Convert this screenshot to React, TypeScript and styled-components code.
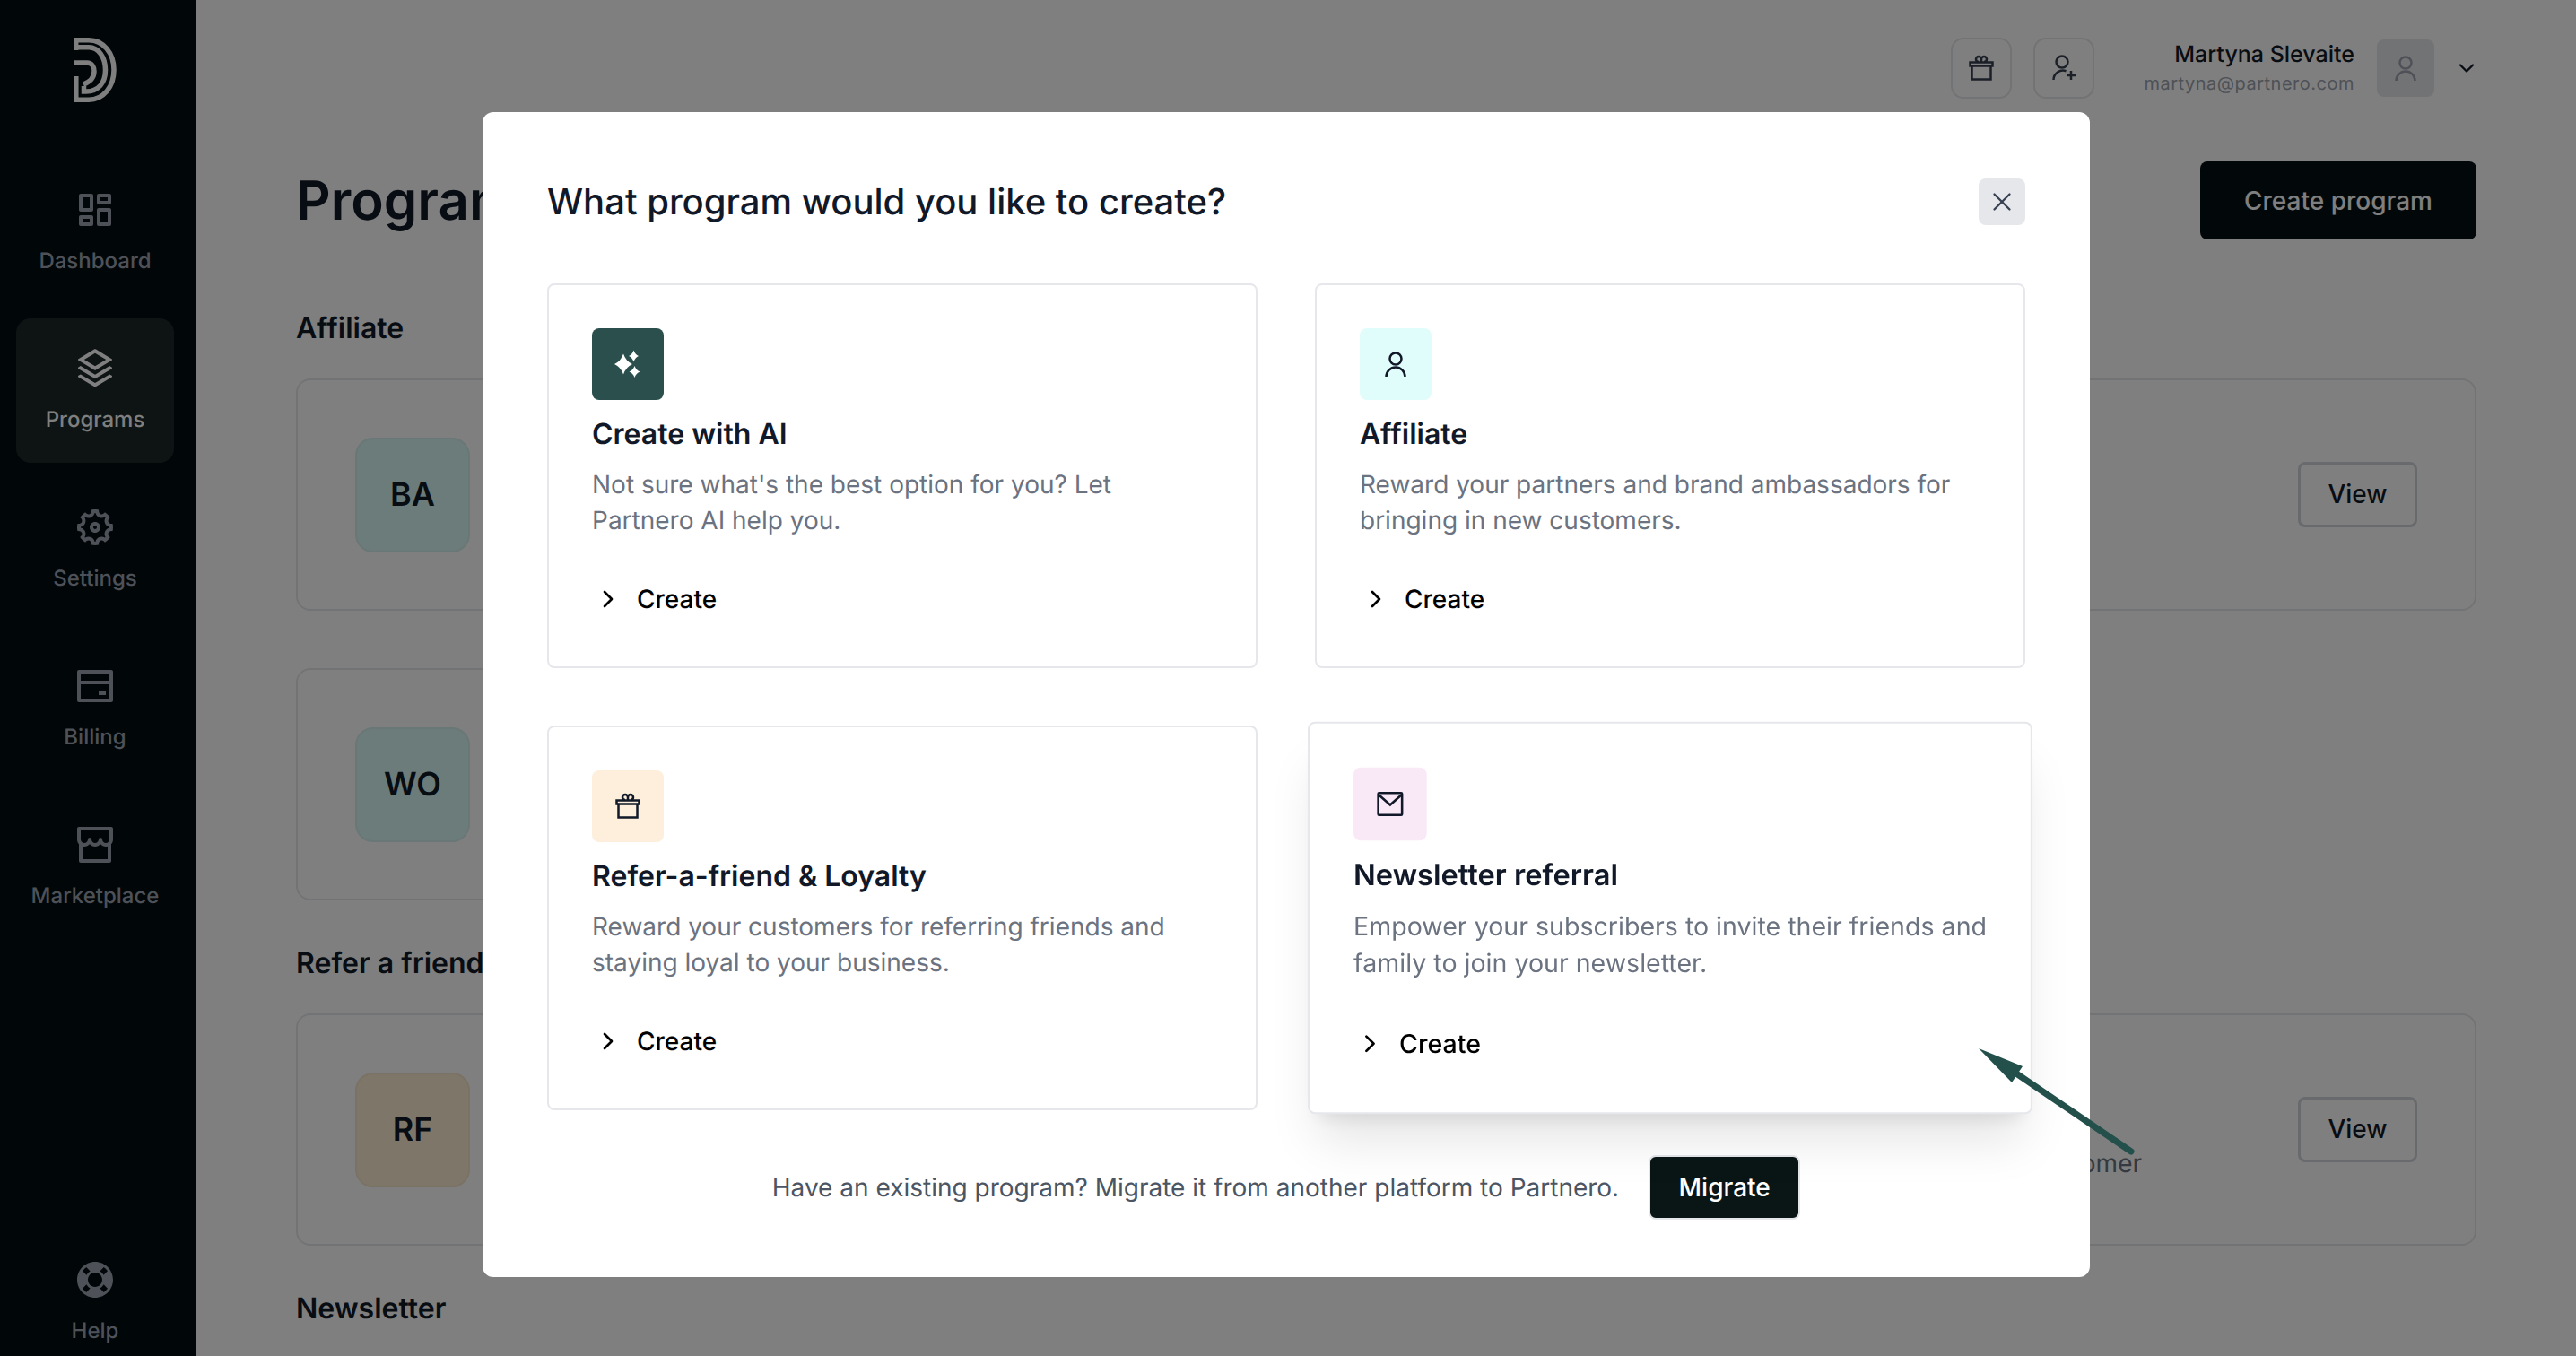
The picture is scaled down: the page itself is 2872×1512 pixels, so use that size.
import React from 'react';
import styled, { createGlobalStyle } from 'styled-components';
import {
  RiDashboardLine,
  RiStackLine,
  RiSettings5Line,
  RiBankCardLine,
  RiStoreLine,
  RiLifebuoyFill,
} from 'react-icons/ri';
import { ChevronDown, ChevronRight, X } from 'lucide-react';

const GlobalStyle = createGlobalStyle`
  * { box-sizing: border-box; }
  html, body { margin: 0; padding: 0; height: 100%; overflow: hidden; background: #fff; }
  body {
    font-family: Inter, "Noto Sans", "Liberation Sans", sans-serif;
    color: #111827;
    text-rendering: geometricPrecision;
  }
  button { font-family: inherit; }
`;

const Page = styled.div`
  display: flex;
  width: 2872px;
  height: 1512px;
  overflow: hidden;
`;

const Sidebar = styled.aside`
  flex: 0 0 218px;
  display: flex;
  flex-direction: column;
  align-items: flex-start;
  gap: 16px;
  padding: 42px 18px 0 18px;
  background: #020e12;
`;

const Logo = styled.svg`
  flex: none;
  width: 48px;
  height: 72px;
  margin: 0 0 48px 64px;
  color: #fff;
`;

const NavItem = styled.div<{ $active?: boolean; $bottom?: boolean }>`
  display: flex;
  flex-direction: column;
  align-items: center;
  gap: 15px;
  width: 176px;
  height: ${(p) => (p.$bottom ? '141px' : '161px')};
  margin-top: ${(p) => (p.$bottom ? 'auto' : '0')};
  padding-top: 32px;
  border-radius: 16px;
  background: ${(p) => (p.$active ? '#1c2829' : 'transparent')};
  color: ${(p) => (p.$active ? '#fff' : '#9ca3af')};
  font-size: 24px;
  line-height: 36px;
  font-weight: 500;
  & > svg { flex: none; }
`;

const Main = styled.main`
  flex: 1;
  min-width: 0;
  padding: 0 111px 0 112px;
`;

const TopBar = styled.header`
  display: flex;
  justify-content: flex-end;
  align-items: center;
  height: 152px;
  margin-bottom: 28px;
  color: #374151;
`;

const IconButton = styled.div`
  display: flex;
  align-items: center;
  justify-content: center;
  width: 68px;
  height: 68px;
  margin-right: 24px;
  border: 2px solid #e5e7eb;
  border-radius: 14px;
`;

const UserBlock = styled.div`
  display: flex;
  flex-direction: column;
  align-items: flex-end;
  margin: 0 25px 0 31px;
  padding-top: 2px;
`;

const UserName = styled.span`
  font-size: 25px;
  line-height: 32px;
  font-weight: 500;
  color: #111827;
`;

const UserMail = styled.span`
  font-size: 20px;
  line-height: 32px;
  letter-spacing: 0.5px;
  color: #9ca3af;
`;

const Avatar = styled.div`
  display: flex;
  align-items: center;
  justify-content: center;
  width: 64px;
  height: 64px;
  margin-right: 22px;
  border-radius: 8px;
  background: #e5e7eb;
  color: #9ca3af;
`;

const HeaderCaret = styled(ChevronDown)`
  margin-right: -3px;
  color: #111827;
`;

const TitleRow = styled.div`
  display: flex;
  justify-content: space-between;
  align-items: center;
  height: 87px;
  margin-bottom: 75px;
`;

const PageTitle = styled.h1`
  margin: 0;
  font-size: 60px;
  line-height: 72px;
  font-weight: 600;
`;

const DarkButton = styled.button`
  height: 87px;
  padding: 0 49px;
  border: 0;
  border-radius: 8px;
  background: #051012;
  color: #fff;
  font-size: 28px;
  font-weight: 500;
`;

const SectionTitle = styled.h2`
  margin: 0 0 32px;
  font-size: 32px;
  line-height: 48px;
  font-weight: 600;
`;

const ProgramCard = styled.div<{ $narrow?: boolean }>`
  display: flex;
  align-items: center;
  width: ${(p) => (p.$narrow ? '1200px' : '100%')};
  height: 259px;
  margin-bottom: ${(p) => (p.$narrow ? '45px' : '64px')};
  padding: 0 64px;
  border: 2px solid #e5e7eb;
  border-radius: 16px;
`;

const CardStack = styled.div`
  & > div:last-child { margin-bottom: 46px; }
`;

const ProgramTile = styled.div<{ $tint: string; $edge: string }>`
  display: flex;
  align-items: center;
  justify-content: center;
  width: 128px;
  height: 128px;
  padding-bottom: 2px;
  border: 2px solid ${(p) => p.$edge};
  border-radius: 20px;
  background: ${(p) => p.$tint};
  font-size: 36px;
  font-weight: 600;
`;

const ProgramMeta = styled.div`
  align-self: flex-end;
  margin: 0 174px 70px auto;
  font-size: 28px;
  line-height: 40px;
  color: #6b7280;
`;

const ViewButton = styled.button`
  width: 133px;
  height: 73px;
  margin-left: auto;
  padding-bottom: 2px;
  border: 3px solid #d1d5db;
  border-radius: 8px;
  background: transparent;
  color: #111827;
  font-size: 28px;
  font-weight: 500;
  ${ProgramMeta} + & { margin-left: 0; }
`;

const Backdrop = styled.div`
  position: fixed;
  inset: 0;
  display: flex;
  justify-content: center;
  align-items: flex-start;
  padding: 125px 4px 0 0;
  background: rgba(0, 0, 0, 0.5);
`;

const Modal = styled.section`
  width: 1792px;
  height: 1299px;
  padding: 74px 72px 0;
  overflow: hidden;
  border-radius: 12px;
  background: #fff;
`;

const ModalHeader = styled.div`
  display: flex;
  justify-content: space-between;
  align-items: center;
  margin-bottom: 65px;
`;

const ModalTitle = styled.h2`
  margin: 0;
  font-size: 40px;
  line-height: 52px;
  font-weight: 500;
`;

const CloseButton = styled.button`
  display: flex;
  align-items: center;
  justify-content: center;
  width: 52px;
  height: 52px;
  padding: 0;
  border: 0;
  border-radius: 8px;
  background: #e5e7eb;
  color: #374151;
`;

const TypeGrid = styled.div`
  display: grid;
  grid-template-columns: 792px 792px;
  column-gap: 64px;
  row-gap: 64px;
`;

const TypeCard = styled.article<{ $raised?: boolean }>`
  padding: 48px;
  border: 2px solid #e5e7eb;
  border-radius: 8px;
  background: #fff;
  ${(p) =>
    p.$raised &&
    `
    transform: scale(1.02);
    box-shadow: 0 40px 50px -10px rgba(0, 0, 0, 0.1), 0 16px 20px -12px rgba(0, 0, 0, 0.1);
  `}
`;

const TypeIcon = styled.div<{ $tint: string; $light?: boolean }>`
  display: flex;
  align-items: center;
  justify-content: center;
  width: 80px;
  height: 80px;
  border-radius: 8px;
  background: ${(p) => p.$tint};
  color: ${(p) => (p.$light ? '#fff' : '#111827')};
`;

const TypeTitle = styled.h3`
  margin: 14px 0 12px;
  font-size: 32px;
  line-height: 48px;
  font-weight: 600;
`;

const TypeText = styled.p`
  margin: 0 -8px 0 0;
  font-size: 28px;
  line-height: 40px;
  color: #6b7280;
`;

const CreateLink = styled.div`
  display: flex;
  align-items: center;
  gap: 16px;
  height: 54px;
  margin-top: 41px;
  padding-left: 2px;
  color: #000;
  font-size: 28px;
  font-weight: 500;
`;

const Footer = styled.div`
  display: flex;
  justify-content: center;
  align-items: center;
  gap: 33px;
  margin-top: 50px;
  color: #4b5563;
  font-size: 28px;
`;

const MigrateButton = styled.button`
  width: 169px;
  height: 72px;
  border: 2px solid #e5e7eb;
  border-radius: 8px;
  background: #0a1616;
  color: #fff;
  font-size: 28px;
  font-weight: 500;
`;

const PointerArrow = styled.svg`
  position: fixed;
  left: 2190px;
  top: 1155px;
  width: 200px;
  height: 140px;
  color: #24504b;
`;

const UserGlyph = () => (
  <svg width="40" height="40" viewBox="0 0 40 40" fill="none" stroke="currentColor" strokeWidth="2.5">
    <circle cx="20" cy="14" r="6.5" />
    <path d="M9.5 34a10.5 10.5 0 0 1 21 0" />
  </svg>
);

const UserPlusGlyph = () => (
  <svg width="40" height="40" viewBox="0 0 40 40" fill="none" stroke="currentColor" strokeWidth="2.5">
    <circle cx="18" cy="13" r="6.5" />
    <path d="M8.5 33a10.5 10.5 0 0 1 14-9.8M28 23v10M23 28h10" />
  </svg>
);

const GiftGlyph = () => (
  <svg width="40" height="40" viewBox="0 0 40 40" fill="none" stroke="currentColor" strokeWidth="2.5">
    <path d="M7.500 13.5h25v4h-25zM9.500 17.500h21v15h-21z" />
    <path d="M20 13v-3a3 3 0 0 0-6 0c0 1.500 1 3 3 3M20 13v-3a3 3 0 0 1 6 0c0 1.500-1 3-3 3" />
  </svg>
);

const MailGlyph = () => (
  <svg width="40" height="40" viewBox="0 0 40 40" fill="none" stroke="currentColor" strokeWidth="2.5">
    <rect x="7" y="8" width="26" height="24" rx="1" />
    <path d="M7.500 10L20 21l12.500-11" />
  </svg>
);

const star = (x: number, y: number, w: number, h: number) =>
  `M${x} ${y - h}Q${x + w * 0.28} ${y - h * 0.28} ${x + w} ${y}Q${x + w * 0.28} ${y + h * 0.28} ${x} ${y + h}Q${x - w * 0.28} ${y + h * 0.28} ${x - w} ${y}Q${x - w * 0.28} ${y - h * 0.28} ${x} ${y - h}Z`;

const SparkleGlyph = () => (
  <svg width="40" height="40" viewBox="0 0 40 40" fill="currentColor">
    <path d={star(15, 20, 10, 11.5)} />
    <path d={star(26.5, 11, 5.5, 6.5)} />
    <path d={star(27.5, 28.5, 6, 6.5)} />
  </svg>
);

const nav = [
  { label: 'Dashboard', Icon: RiDashboardLine },
  { label: 'Programs', Icon: RiStackLine, active: true },
  { label: 'Settings', Icon: RiSettings5Line },
  { label: 'Billing', Icon: RiBankCardLine },
  { label: 'Marketplace', Icon: RiStoreLine },
];

const types = [
  {
    title: 'Create with AI',
    text: "Not sure what's the best option for you? Let Partnero AI help you.",
    tint: '#2a4f4c',
    light: true,
    glyph: <SparkleGlyph />,
  },
  {
    title: 'Affiliate',
    text: 'Reward your partners and brand ambassadors for bringing in new customers.',
    tint: '#e0fdfb',
    glyph: <UserGlyph />,
  },
  {
    title: 'Refer-a-friend & Loyalty',
    text: 'Reward your customers for referring friends and staying loyal to your business.',
    tint: '#fdefdc',
    glyph: <GiftGlyph />,
  },
  {
    title: 'Newsletter referral',
    text: 'Empower your subscribers to invite their friends and family to join your newsletter.',
    tint: '#f9e8f5',
    raised: true,
    glyph: <MailGlyph />,
  },
];

const App: React.FC = () => {
  return (
    <>
      <GlobalStyle />
      <Page>
        <Sidebar>
          <Logo viewBox="0 0 48 72" fill="none" stroke="currentColor" strokeWidth="5.500">
            <path d="M2.700 0V14M0 2.800H17C33 2.800 45 17 45 36C45 55 33 69.200 17 69.200H2.800V43" />
            <path d="M0 10.800H17C28 10.800 35.500 22 35.500 36C35.500 50 28 60 14 60H11.500V54" />
            <path d="M0 28H15C20.500 28 23 32.500 23 37.500C23 44 19 49 11 52" />
          </Logo>
          {nav.map(({ label, Icon, active }) => (
            <NavItem key={label} $active={active}>
              <Icon size={48} />
              {label}
            </NavItem>
          ))}
          <NavItem $bottom>
            <RiLifebuoyFill size={48} />
            Help
          </NavItem>
        </Sidebar>
        <Main>
          <TopBar>
            <IconButton>
              <GiftGlyph />
            </IconButton>
            <IconButton>
              <UserPlusGlyph />
            </IconButton>
            <UserBlock>
              <UserName>Martyna Slevaite</UserName>
              <UserMail>martyna@partnero.com</UserMail>
            </UserBlock>
            <Avatar>
              <UserGlyph />
            </Avatar>
            <HeaderCaret size={28} />
          </TopBar>
          <TitleRow>
            <PageTitle>Programs</PageTitle>
            <DarkButton>Create program</DarkButton>
          </TitleRow>
          <SectionTitle>Affiliate</SectionTitle>
          <CardStack>
            <ProgramCard>
              <ProgramTile $tint="#d8f8f4" $edge="#d2efec">BA</ProgramTile>
              <ViewButton>View</ViewButton>
            </ProgramCard>
            <ProgramCard $narrow>
              <ProgramTile $tint="#d8f8f4" $edge="#d2efec">WO</ProgramTile>
            </ProgramCard>
          </CardStack>
          <SectionTitle>Refer a friend</SectionTitle>
          <CardStack>
            <ProgramCard>
              <ProgramTile $tint="#fcecd0" $edge="#f4e4c8">RF</ProgramTile>
              <ProgramMeta>Reward per customer</ProgramMeta>
              <ViewButton>View</ViewButton>
            </ProgramCard>
          </CardStack>
          <SectionTitle>Newsletter</SectionTitle>
        </Main>
      </Page>
      <Backdrop>
        <Modal>
          <ModalHeader>
            <ModalTitle>What program would you like to create?</ModalTitle>
            <CloseButton>
              <X size={34} strokeWidth={1.6} />
            </CloseButton>
          </ModalHeader>
          <TypeGrid>
            {types.map((t) => (
              <TypeCard key={t.title} $raised={t.raised}>
                <TypeIcon $tint={t.tint} $light={t.light}>
                  {t.glyph}
                </TypeIcon>
                <TypeTitle>{t.title}</TypeTitle>
                <TypeText>{t.text}</TypeText>
                <CreateLink>
                  <ChevronRight size={32} />
                  Create
                </CreateLink>
              </TypeCard>
            ))}
          </TypeGrid>
          <Footer>
            Have an existing program? Migrate it from another platform to Partnero.
            <MigrateButton>Migrate</MigrateButton>
          </Footer>
        </Modal>
      </Backdrop>
      <PointerArrow viewBox="0 0 200 140" fill="currentColor">
        <path d="M186 129L58 42" stroke="currentColor" strokeWidth="7" strokeLinecap="round" />
        <path d="M16 14L65 34L53 52Z" />
      </PointerArrow>
    </>
  );
};

export default App;
